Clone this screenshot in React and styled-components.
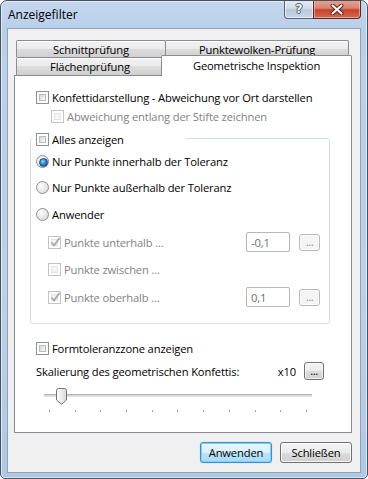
import styled, { createGlobalStyle } from 'styled-components'

const GlobalStyle = createGlobalStyle`
  html, body {
    margin: 0;
    padding: 0;
    background: #fff;
  }
  body {
    font-family: "Open Sans", "Liberation Sans", sans-serif;
    font-size: 11.2px;
    letter-spacing: -0.15px;
    color: #000;
  }
  * {
    box-sizing: border-box;
  }
`

const Window = styled.div`
  width: 368px;
  height: 479px;
  display: flex;
  flex-direction: column;
  border: 1px solid #46535f;
  border-radius: 7px 7px 5px 5px;
  background: linear-gradient(to bottom, #c3d7ee 0, #b9d0ea 28px, #bcd2ea 60%, #aec8e4 100%);
  box-shadow: inset 0 0 0 1px rgba(255, 255, 255, 0.55);
  overflow: hidden;
`

const TitleBar = styled.div`
  height: 27px;
  flex-shrink: 0;
  display: flex;
  align-items: flex-start;
  padding-left: 7px;
`

const Title = styled.div`
  line-height: 27px;
  font-size: 12px;
  letter-spacing: 0;
  color: #000;
`

const Caption = styled.div`
  margin-left: auto;
  margin-right: 6px;
  margin-top: -1px;
  display: flex;
`

const HelpButton = styled.div`
  width: 29px;
  height: 19px;
  border: 1px solid #56657a;
  border-right: none;
  border-top: none;
  border-radius: 0 0 0 4px;
  background: linear-gradient(to bottom, #e5ecf4 0, #d3dde9 45%, #b9c8da 55%, #c9d6e5 100%);
  box-shadow: inset 0 0 0 1px rgba(255, 255, 255, 0.6);
  display: flex;
  align-items: center;
  justify-content: center;
  font-family: "DejaVu Sans", sans-serif;
  font-weight: bold;
  font-size: 12px;
  color: #f4f6f9;
  text-shadow: 1px 0 #4d5b6c, -1px 0 #4d5b6c, 0 1px #4d5b6c, 0 -1px #4d5b6c;
`

const CloseButton = styled.div`
  width: 48px;
  height: 19px;
  border: 1px solid #5a2a22;
  border-top: none;
  border-radius: 0 0 4px 0;
  background: linear-gradient(to bottom, #e8a493 0, #d98470 45%, #c5432d 55%, #d46a4d 100%);
  box-shadow: inset 0 0 0 1px rgba(255, 220, 210, 0.5);
  display: flex;
  align-items: center;
  justify-content: center;
`

const Client = styled.div`
  height: 445px;
  margin: 0 6px;
  background: #f0f0f0;
  border: 1px solid #8fa2b8;
  padding: 11px 8px 0 6px;
  display: flex;
  flex-direction: column;
`

const TabStrip = styled.div`
  height: 35px;
  display: flex;
  flex-direction: column;
`

const TabRow = styled.div`
  height: ${p => p.$h}px;
  display: flex;
  align-items: flex-start;
  padding-left: 2px;
`

const Tab = styled.div`
  position: relative;
  width: ${p => p.$w}px;
  height: ${p => p.$active ? p.$h + 3 : p.$h}px;
  margin: ${p => p.$active ? '-2px -2px 0 -3px' : `0 0 0 ${p.$first ? 0 : -1}px`};
  z-index: ${p => p.$active ? 2 : 0};
  border: 1px solid #898c95;
  border-bottom: ${p => p.$active ? 'none' : '0'};
  border-radius: 2px 2px 0 0;
  background: ${p => p.$active
    ? '#fff'
    : 'linear-gradient(to bottom, #f2f2f2 0, #ebebeb 50%, #dddddd 50%, #cfcfcf 100%)'};
  box-shadow: ${p => p.$active ? 'none' : 'inset 0 1px 0 #fcfcfc'};
  display: flex;
  align-items: ${p => p.$active ? 'flex-start' : 'center'};
  padding-top: ${p => p.$active ? '2px' : '0'};
  justify-content: center;
  color: #000;
`

const Panel = styled.div`
  height: 358px;
  border: 1px solid #898c95;
  background: #fff;
  display: flex;
  flex-direction: column;
`

const Line = styled.div`
  display: flex;
  align-items: center;
  height: ${p => p.$h || 20}px;
  margin-top: ${p => p.$mt || 0}px;
  padding-left: ${p => p.$indent || 0}px;
  padding-right: ${p => p.$pr || 0}px;
  color: ${p => p.$disabled ? '#838383' : '#000'};
`

const Label = styled.span`
  margin-left: 3px;
  white-space: nowrap;
`

const Box = styled.span`
  position: relative;
  width: 13px;
  height: 13px;
  flex-shrink: 0;
  border: 1px solid ${p => p.$disabled ? '#c3c3c3' : '#8e8f8f'};
  background: #fff;

  &::after {
    content: '';
    position: absolute;
    inset: 2px;
    border: 1px solid ${p => p.$disabled ? '#e3e3e3' : '#b8bcc1'};
    background: ${p => p.$disabled
      ? '#f4f4f4'
      : 'linear-gradient(135deg, #d6d8db 0, #eeeeee 70%, #f8f8f8 100%)'};
  }

  svg {
    position: absolute;
    left: 1px;
    top: 0;
    z-index: 1;
  }
`

const Round = styled.span`
  position: relative;
  width: 13px;
  height: 13px;
  flex-shrink: 0;
  border-radius: 50%;
  border: 1px solid #8e8f8f;
  background: radial-gradient(circle at 35% 35%, #ffffff 0, #eaeaea 45%, #cfd1d3 100%);

  &::after {
    content: '';
    display: ${p => p.$checked ? 'block' : 'none'};
    position: absolute;
    left: 2px;
    top: 2px;
    width: 7px;
    height: 7px;
    border-radius: 50%;
    border: 1px solid #1d4b7c;
    background: radial-gradient(circle at 40% 35%, #9fdcff 0, #2b8fdb 40%, #0b4d91 100%);
  }
`

const Group = styled.div`
  position: relative;
  margin: 12px 21px 0 15px;
  border: 1px solid #d5dfe5;
  border-radius: 3px;
  padding: 9px 9px 12px 5px;
  display: flex;
  flex-direction: column;
`

const Legend = styled.div`
  position: absolute;
  top: -8px;
  left: 1px;
  width: 154px;
  height: 16px;
  padding-left: 4px;
  background: #fff;
  display: flex;
  align-items: center;
`

const ValueBox = styled.div`
  margin-left: auto;
  width: 44px;
  height: 20px;
  border: 1px solid #b5b9bd;
  border-radius: 2px;
  background: #fff;
  color: #6d6d6d;
  padding-left: 4px;
  display: flex;
  align-items: center;
`

const DotsButton = styled.div`
  width: ${p => p.$w || 21}px;
  height: ${p => p.$h || 17}px;
  margin-left: ${p => p.$ml || 9}px;
  border: 1px solid ${p => p.$disabled ? '#b5b9bd' : '#707070'};
  border-radius: 3px;
  background: ${p => p.$disabled
    ? '#f4f4f4'
    : 'linear-gradient(to bottom, #f2f2f2 0, #ebebeb 50%, #dddddd 50%, #cfcfcf 100%)'};
  box-shadow: inset 0 0 0 1px rgba(255, 255, 255, 0.7);
  color: ${p => p.$disabled ? '#8a8a8a' : '#000'};
  display: flex;
  align-items: center;
  justify-content: center;
  padding-bottom: 2px;
  letter-spacing: -0.5px;
`

const Factor = styled.span`
  margin-left: auto;
`

const Slider = styled.div`
  position: relative;
  width: 268px;
  height: 30px;
  margin: 3px 0 0 29px;
  padding-top: 10px;
`

const Track = styled.div`
  height: 3px;
  border-top: 1px solid #b4b4b4;
  border-bottom: 1px solid #e2e2e2;
  background: #d6d6d6;
`

const Ticks = styled.div`
  margin-top: 13px;
  padding: 0 5px;
  display: flex;
  justify-content: space-between;
`

const Tick = styled.span`
  width: 1px;
  height: 2px;
  background: #a0a0a0;
`

const Thumb = styled.svg`
  position: absolute;
  left: 12px;
  top: 4px;
`

const Footer = styled.div`
  display: flex;
  justify-content: flex-end;
  gap: 8px;
  margin-top: 9px;
`

const Button = styled.div`
  width: 72px;
  height: 21px;
  border: 1px solid ${p => p.$default ? '#3c8ed8' : '#707070'};
  border-radius: 3px;
  background: ${p => p.$default
    ? 'linear-gradient(to bottom, #eaf6fd 0, #d9f0fc 50%, #bee6fd 50%, #a7d9f5 100%)'
    : 'linear-gradient(to bottom, #f2f2f2 0, #ebebeb 50%, #dddddd 50%, #cfcfcf 100%)'};
  box-shadow: ${p => p.$default
    ? 'inset 0 0 0 1px #7fd0f7, 0 0 1px #57b6ee'
    : 'inset 0 0 0 1px rgba(255, 255, 255, 0.8)'};
  display: flex;
  align-items: center;
  justify-content: center;
  color: #000;
`

const Check = () => (
  <svg width="11" height="11" viewBox="0 0 11 11">
    <path d="M1.5 5.5 L4 8.5 L9.5 1" fill="none" stroke="#a8a8a8" strokeWidth="1.8" />
  </svg>
)

const CheckBox = ({ checked, disabled }) => (
  <Box $disabled={disabled}>{checked && <Check />}</Box>
)

const tabsBack = [
  { text: 'Schnittprüfung', w: 150 },
  { text: 'Punktewolken-Prüfung', w: 184 },
]

const tabsFront = [
  { text: 'Flächenprüfung', w: 148 },
  { text: 'Geometrische Inspektion', w: 191, active: true },
]

const ValueLine = ({ label, value, h }) => (
  <Line $h={h} $indent={12} $disabled>
    <CheckBox checked disabled />
    <Label>{label}</Label>
    {value !== undefined && (
      <>
        <ValueBox>{value}</ValueBox>
        <DotsButton $disabled>...</DotsButton>
      </>
    )}
  </Line>
)

export default function App() {
  return (
    <>
      <GlobalStyle />
      <Window>
        <TitleBar>
          <Title>Anzeigefilter</Title>
          <Caption>
            <HelpButton>?</HelpButton>
            <CloseButton>
              <svg width="14" height="11" viewBox="0 0 14 11">
                <path d="M2.5 1.5 L11.5 9.5 M11.5 1.5 L2.5 9.5" stroke="#4e1c14" strokeWidth="4" strokeLinecap="round" />
                <path d="M2.5 1.5 L11.5 9.5 M11.5 1.5 L2.5 9.5" stroke="#fff" strokeWidth="2.2" strokeLinecap="round" />
              </svg>
            </CloseButton>
          </Caption>
        </TitleBar>

        <Client>
          <TabStrip>
            <TabRow $h={17}>
              {tabsBack.map((t, i) => (
                <Tab key={t.text} $w={t.w} $h={17} $first={i === 0}>{t.text}</Tab>
              ))}
            </TabRow>
            <TabRow $h={18}>
              {tabsFront.map((t, i) => (
                <Tab key={t.text} $w={t.w} $h={18} $first={i === 0} $active={t.active}>{t.text}</Tab>
              ))}
            </TabRow>
          </TabStrip>

          <Panel>
            <Line $h={19} $mt={12} $indent={21}>
              <CheckBox />
              <Label>Konfettidarstellung - Abweichung vor Ort darstellen</Label>
            </Line>
            <Line $h={19} $indent={36} $disabled>
              <CheckBox disabled />
              <Label>Abweichung entlang der Stifte zeichnen</Label>
            </Line>

            <Group>
              <Legend>
                <CheckBox />
                <Label>Alles anzeigen</Label>
              </Legend>
              <Line $h={26}>
                <Round $checked />
                <Label>Nur Punkte innerhalb der Toleranz</Label>
              </Line>
              <Line $h={26}>
                <Round />
                <Label>Nur Punkte außerhalb der Toleranz</Label>
              </Line>
              <Line $h={28}>
                <Round />
                <Label>Anwender</Label>
              </Line>
              <ValueLine h={28} label="Punkte unterhalb ..." value="-0,1" />
              <Line $h={27} $indent={12} $disabled>
                <CheckBox disabled />
                <Label>Punkte zwischen ...</Label>
              </Line>
              <ValueLine h={28} label="Punkte oberhalb ..." value="0,1" />
            </Group>

            <Line $mt={14} $indent={21}>
              <CheckBox />
              <Label>Formtoleranzzone anzeigen</Label>
            </Line>
            <Line $mt={3} $indent={21} $pr={27}>
              <span>Skalierung des geometrischen Konfettis:</span>
              <Factor>x10</Factor>
              <DotsButton $w={20} $h={18} $ml={8}>...</DotsButton>
            </Line>

            <Slider>
              <Track />
              <Ticks>
                {Array.from({ length: 11 }, (_, i) => <Tick key={i} />)}
              </Ticks>
              <Thumb width="11" height="17" viewBox="0 0 11 17">
                <defs>
                  <linearGradient id="thumbFill" x1="0" y1="0" x2="1" y2="0">
                    <stop offset="0" stopColor="#ffffff" />
                    <stop offset="1" stopColor="#d9d9d9" />
                  </linearGradient>
                </defs>
                <path d="M0.5 2.5 Q0.5 0.5 2.5 0.5 H8.5 Q10.5 0.5 10.5 2.5 V12 L5.5 16.3 L0.5 12 Z" fill="url(#thumbFill)" stroke="#6f7378" />
              </Thumb>
            </Slider>
          </Panel>

          <Footer>
            <Button $default>Anwenden</Button>
            <Button>Schließen</Button>
          </Footer>
        </Client>
      </Window>
    </>
  )
}
